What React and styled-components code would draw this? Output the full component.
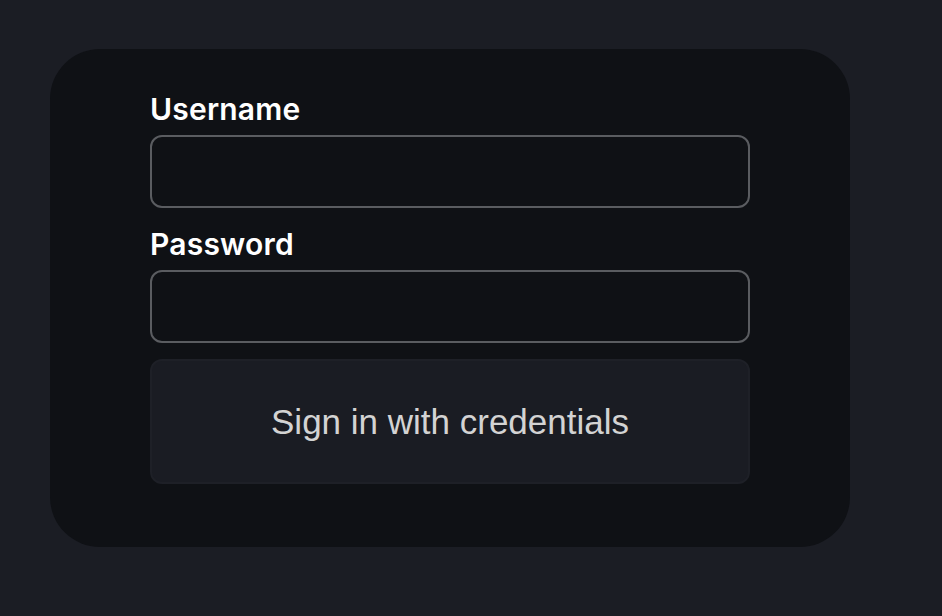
import React from 'react';
import styled, { createGlobalStyle } from 'styled-components';

const GlobalStyle = createGlobalStyle`
  html, body {
    margin: 0;
    padding: 0;
    background: #1b1d24;
  }
  body {
    font-family: Inter, "Noto Sans", sans-serif;
  }
`;

const Page = styled.div`
  width: 942px;
  height: 616px;
  padding: 49px 0 0 50px;
  box-sizing: border-box;
  background: #1b1d24;
`;

const Card = styled.form`
  width: 800px;
  height: 498px;
  box-sizing: border-box;
  padding: 40px 100px 0;
  background: #0f1115;
  border-radius: 50px;
  display: flex;
  flex-direction: column;
`;

const Label = styled.label`
  color: #ffffff;
  font-size: 30px;
  font-weight: 600;
  letter-spacing: 0.2px;
  line-height: 40px;
  margin-bottom: 6px;
`;

const Input = styled.input`
  width: 600px;
  height: 73px;
  box-sizing: border-box;
  background: #0f1115;
  border: 2px solid #5a5c60;
  border-radius: 12px;
  margin-bottom: ${p => p.$gap || 0}px;
  outline: none;
  color: #fff;
  font-size: 24px;
  padding: 0 16px;
`;

const Button = styled.button`
  width: 600px;
  height: 125px;
  box-sizing: border-box;
  background: #1a1c23;
  border: 2px solid #1e2027;
  border-radius: 12px;
  color: #d3d3d3;
  font-family: "Liberation Sans", Arial, sans-serif;
  font-size: 35px;
  cursor: pointer;
`;

export default function App() {
  return (
    <>
      <GlobalStyle />
      <Page>
        <Card onSubmit={e => e.preventDefault()}>
          <Label htmlFor="username">Username</Label>
          <Input id="username" type="text" $gap={16} />
          <Label htmlFor="password">Password</Label>
          <Input id="password" type="password" $gap={16} />
          <Button type="submit">Sign in with credentials</Button>
        </Card>
      </Page>
    </>
  );
}
